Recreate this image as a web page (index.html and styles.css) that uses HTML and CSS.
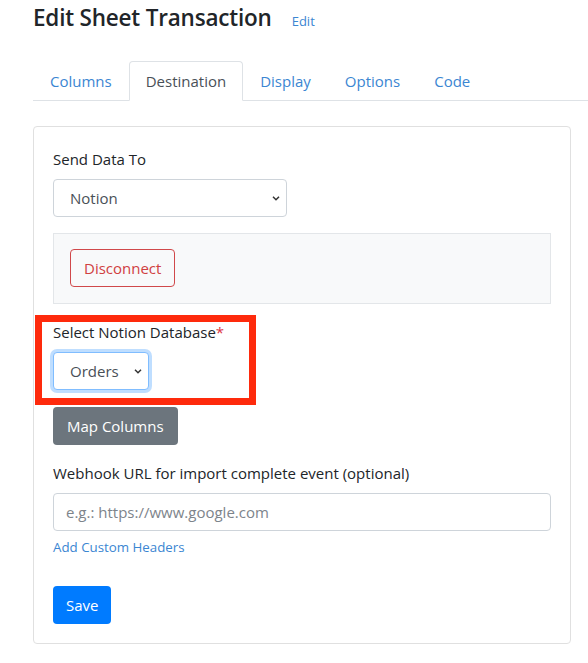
FILE: index.html
```html
<!DOCTYPE html>
<html lang="en">
<head>
<meta charset="utf-8">
<title>Edit Sheet Transaction</title>
<link rel="stylesheet" href="styles.css">
</head>
<body>
<div class="page">
  <header class="page-header">
    <h4 class="page-title">Edit Sheet Transaction</h4>
    <a class="title-edit" href="#">Edit</a>
  </header>

  <ul class="nav-tabs">
    <li><a class="nav-link" href="#">Columns</a></li>
    <li><a class="nav-link active" href="#">Destination</a></li>
    <li><a class="nav-link" href="#">Display</a></li>
    <li><a class="nav-link" href="#">Options</a></li>
    <li><a class="nav-link" href="#">Code</a></li>
  </ul>

  <div class="card">
    <div class="form-group">
      <label class="form-label">Send Data To</label>
      <div class="select select-wide">
        <span>Notion</span>
        <svg class="chevron" width="8" height="5" viewBox="0 0 8 5"><path d="M1 0.8l3 3 3-3" fill="none" stroke="#333" stroke-width="1.5"/></svg>
      </div>
    </div>

    <div class="connect-box">
      <button class="btn btn-outline-danger">Disconnect</button>
    </div>

    <div class="form-group db-group">
      <label class="form-label">Select Notion Database<span class="req">*</span></label>
      <div class="select select-focus">
        <span>Orders</span>
        <svg class="chevron" width="8" height="5" viewBox="0 0 8 5"><path d="M1 0.8l3 3 3-3" fill="none" stroke="#333" stroke-width="1.5"/></svg>
      </div>
      <div class="highlight"></div>
    </div>

    <button class="btn btn-secondary">Map Columns</button>

    <div class="form-group webhook-group">
      <label class="form-label">Webhook URL for import complete event (optional)</label>
      <input class="form-control" type="text" placeholder="e.g.: https://www.google.com">
      <a class="form-text" href="#">Add Custom Headers</a>
    </div>

    <button class="btn btn-primary">Save</button>
  </div>
</div>
</body>
</html>
```

FILE: styles.css
```css
* { box-sizing: border-box; }

html, body {
  margin: 0;
  padding: 0;
  background: #fff;
}

body {
  font-family: "Open Sans", "Noto Sans", sans-serif;
  font-size: 15px;
  line-height: 1.5;
  color: #212529;
  overflow: hidden;
}

.page {
  padding-left: 33px;
  width: 588px;
}

.page-header {
  display: flex;
  align-items: baseline;
  gap: 20px;
  padding-top: 4px;
  height: 61px;
}

.page-title {
  margin: 0;
  font-size: 22.5px;
  line-height: 1.2;
  font-weight: 600;
  letter-spacing: -0.2px;
  color: #212529;
}

.title-edit {
  font-size: 13px;
  color: #3b86d2;
  text-decoration: none;
}

.nav-tabs {
  list-style: none;
  margin: 0;
  padding: 0;
  display: flex;
  border-bottom: 1px solid #dee2e6;
}

.nav-link {
  display: block;
  padding: 8px 16px;
  line-height: 22px;
  border: 1px solid transparent;
  border-top-left-radius: 4px;
  border-top-right-radius: 4px;
  margin-bottom: -1px;
  color: #3b86d2;
  text-decoration: none;
}

.nav-link.active {
  color: #495057;
  background: #fff;
  border-color: #dee2e6 #dee2e6 #fff;
}

.card {
  margin-top: 25px;
  width: 538px;
  border: 1px solid #e0e0e0;
  border-radius: 4px;
  padding: 20px 19px 19px;
  display: flex;
  flex-direction: column;
  align-items: flex-start;
}

.form-group {
  display: flex;
  flex-direction: column;
  align-items: flex-start;
  width: 100%;
}

.form-label {
  display: block;
  line-height: 24px;
  margin-bottom: 8px;
}

.req { color: #dc3545; }

.select {
  height: 38px;
  display: flex;
  align-items: center;
  justify-content: space-between;
  padding: 0 6px 0 16px;
  border: 1px solid #ced4da;
  border-radius: 4px;
  background: #fff;
  color: #495057;
}

.select-wide { width: 234px; }

.select-focus {
  width: 96px;
  border-color: #80bdff;
  box-shadow: 0 0 0 3px rgba(0, 123, 255, 0.25);
}

.chevron { flex: none; }

.connect-box {
  margin-top: 16px;
  width: 498px;
  background: #f8f9fa;
  border: 1px solid #e3e6e9;
  padding: 15px 16px 16px;
}

.btn {
  font-family: inherit;
  font-size: 15px;
  line-height: 24px;
  height: 38px;
  padding: 6px 13px;
  border: 1px solid transparent;
  border-radius: 4px;
  cursor: pointer;
}

.btn-outline-danger {
  color: #d0403f;
  background: transparent;
  border-color: #d0484a;
}

.db-group {
  position: relative;
  margin-top: 16px;
}

.highlight {
  position: absolute;
  left: -18px;
  top: -5px;
  width: 221px;
  height: 90px;
  border: 7px solid #fe2a0c;
  pointer-events: none;
}

.btn-secondary {
  margin-top: 17px;
  background: #6c757d;
  color: #fff;
}

.webhook-group {
  margin-top: 16px;
}

.form-control {
  width: 498px;
  height: 38px;
  padding: 6px 12px;
  font-family: inherit;
  font-size: 15px;
  color: #495057;
  border: 1px solid #ced4da;
  border-radius: 4px;
  outline: none;
}

.form-control::placeholder { color: #7d848b; }

.form-text {
  margin-top: 4px;
  font-size: 13.3px;
  line-height: 24px;
  color: #3b86d2;
  text-decoration: none;
}

.btn-primary {
  margin-top: 27px;
  background: #007bff;
  color: #fff;
  padding: 6px 12px;
}
```
